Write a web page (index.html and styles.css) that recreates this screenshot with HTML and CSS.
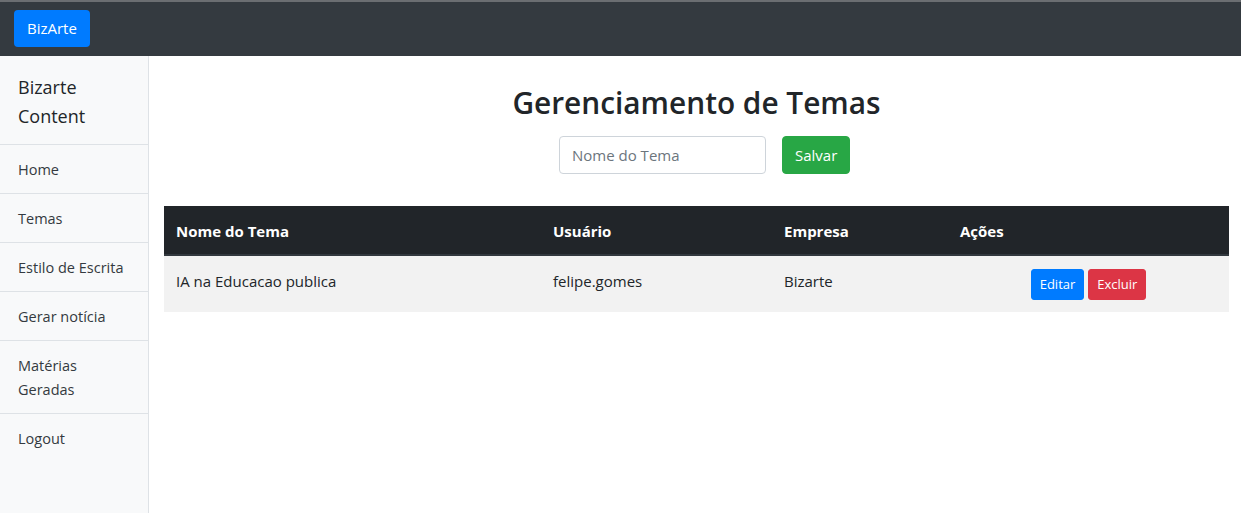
FILE: index.html
```html
<!DOCTYPE html>
<html lang="pt">
<head>
<meta charset="utf-8">
<title>Gerenciamento de Temas</title>
<link rel="stylesheet" href="styles.css">
</head>
<body>
<header class="topbar">
  <a class="brand" href="#">BizArte</a>
</header>
<div class="layout">
  <nav class="sidebar">
    <div class="side-title">Bizarte Content</div>
    <a class="side-link" href="#">Home</a>
    <a class="side-link" href="#">Temas</a>
    <a class="side-link" href="#">Estilo de Escrita</a>
    <a class="side-link" href="#">Gerar notícia</a>
    <a class="side-link" href="#">Matérias Geradas</a>
    <a class="side-link" href="#">Logout</a>
  </nav>
  <main class="content">
    <h2 class="title">Gerenciamento de Temas</h2>
    <form class="theme-form">
      <input class="input" type="text" placeholder="Nome do Tema">
      <button class="btn btn-success" type="button">Salvar</button>
    </form>
    <table class="table">
      <thead>
        <tr>
          <th class="c1">Nome do Tema</th>
          <th class="c2">Usuário</th>
          <th class="c3">Empresa</th>
          <th class="c4">Ações</th>
        </tr>
      </thead>
      <tbody>
        <tr>
          <td>IA na Educacao publica</td>
          <td>felipe.gomes</td>
          <td>Bizarte</td>
          <td class="actions">
            <button class="btn-sm btn-primary" type="button">Editar</button>
            <button class="btn-sm btn-danger" type="button">Excluir</button>
          </td>
        </tr>
      </tbody>
    </table>
  </main>
</div>
</body>
</html>
```
FILE: styles.css
```css
* { box-sizing: border-box; }
html, body { height: 100%; }
body {
  margin: 0;
  font-family: "Open Sans", "Noto Sans", sans-serif;
  font-size: 15px;
  line-height: 1.5;
  color: #212529;
  background: #fff;
  border-top: 2px solid #6b6e72;
}
.topbar {
  background: #343a40;
  height: 54px;
  padding: 8px 14px;
  display: flex;
  align-items: flex-start;
}
.brand {
  display: inline-block;
  background: #007bff;
  color: #fff;
  text-decoration: none;
  font-size: 15px;
  line-height: 23px;
  padding: 7px 13px;
  border-radius: 4px;
}
.layout {
  display: flex;
  min-height: calc(100% - 54px);
}
.sidebar {
  width: 149px;
  flex: 0 0 149px;
  background: #f8f9fa;
  border-right: 1px solid #dee2e6;
  display: flex;
  flex-direction: column;
}
.side-title {
  font-size: 18px;
  line-height: 29px;
  padding: 17px 18px 13px;
  border-bottom: 1px solid #dee2e6;
}
.side-link {
  display: block;
  color: #343a40;
  text-decoration: none;
  font-size: 14.5px;
  line-height: 24px;
  padding: 13px 18px 11px;
  border-bottom: 1px solid #dee2e6;
}
.side-link:last-child { border-bottom: none; }
.content {
  flex: 1;
  padding: 0 12px 0 15px;
}
.title {
  margin: 28px 0 0;
  text-align: center;
  font-size: 29.8px;
  font-weight: 600;
  line-height: 38px;
}
.theme-form {
  display: flex;
  justify-content: center;
  gap: 16px;
  padding-left: 16px;
  margin-top: 14px;
}
.input {
  width: 207px;
  height: 38px;
  border: 1px solid #ced4da;
  border-radius: 4px;
  padding: 6px 12px;
  font-family: inherit;
  font-size: 15px;
  color: #495057;
}
.input::placeholder { color: #6c757d; }
.btn {
  height: 38px;
  border: 1px solid transparent;
  border-radius: 4px;
  padding: 6px 12px;
  font-family: inherit;
  font-size: 15px;
  color: #fff;
}
.btn-success { background: #28a745; border-color: #28a745; width: 68px; }
.table {
  width: 100%;
  margin-top: 32px;
  border-collapse: collapse;
}
.table th {
  background: #212529;
  color: #fff;
  text-align: left;
  font-weight: 700;
  font-size: 15px;
  padding: 13px 12px 11px;
  line-height: 24px;
  border-bottom: 2px solid #32383e;
}
.table td {
  background: #f2f2f2;
  padding: 13px 12px 11px;
  line-height: 24px;
  font-size: 15px;
  vertical-align: top;
}
.c1 { width: 377px; }
.c2 { width: 231px; }
.c3 { width: 176px; }
.table td.actions {
  text-align: center;
  padding: 13px 12px 12px;
  line-height: 31px;
  white-space: nowrap;
}
.btn-sm {
  display: inline-block;
  height: 31px;
  border: 1px solid transparent;
  border-radius: 3px;
  padding: 3px 8px;
  font-family: inherit;
  font-size: 13px;
  line-height: 23px;
  color: #fff;
  vertical-align: top;
}
.btn-primary { background: #007bff; border-color: #007bff; }
.btn-danger { background: #dc3545; border-color: #dc3545; }
```
